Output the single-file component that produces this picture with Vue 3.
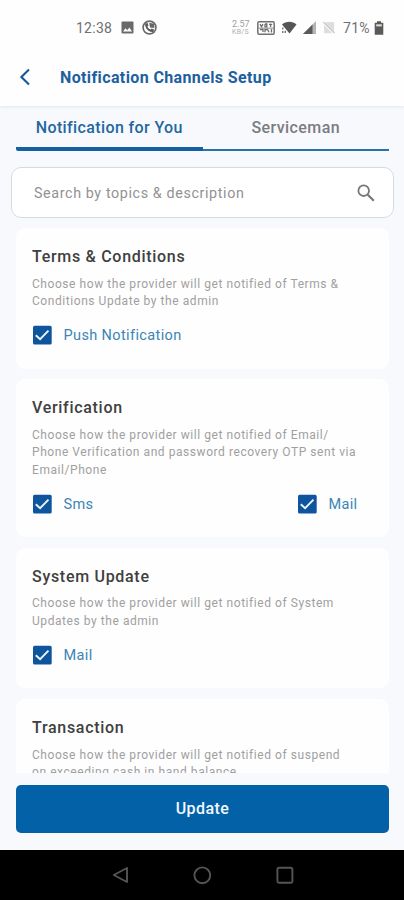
<script setup>
import { ref } from 'vue'

const query = ref('')
const cards = ref([
  {
    title: 'Terms & Conditions',
    lines: ['Choose how the provider will get notified of Terms &', 'Conditions Update by the admin'],
    options: ['Push Notification']
  },
  {
    title: 'Verification',
    lines: ['Choose how the provider will get notified of Email/', 'Phone Verification and password recovery OTP sent via', 'Email/Phone'],
    options: ['Sms', 'Mail']
  },
  {
    title: 'System Update',
    lines: ['Choose how the provider will get notified of System', 'Updates by the admin'],
    options: ['Mail']
  },
  {
    title: 'Transaction',
    lines: ['Choose how the provider will get notified of suspend', 'on exceeding cash in hand balance'],
    options: []
  }
])
</script>

<template>
  <div class="screen">
    <header class="top">
      <div class="status">
        <div class="status-left">
          <span class="clock">12:38</span>
          <svg class="pic" width="13" height="13" viewBox="0 0 13 13">
            <rect x="0.5" y="0.5" width="12" height="12" rx="1" fill="#6a6a6a" />
            <path d="M2 10.5 4.5 7.3 6.3 9.2 8.4 6.6 11 10.5Z" fill="#fff" />
          </svg>
          <svg class="call" width="15" height="15" viewBox="0 0 15 15">
            <circle cx="7.5" cy="7.5" r="6.4" fill="#fff" stroke="#6a6a6a" stroke-width="1.7" />
            <path d="M3.2 3.5 5.6 3 6.5 5.5 5.4 6.6C6 8 7 9 8.5 9.6L9.7 8.5 12 9.6 11.5 11.8C7 13 2.5 8 3.2 3.5Z" fill="#5a5a5a" />
            <path d="M7.2 2.8 12 3.8 12.3 8 8 7.4Z" fill="#666" />
          </svg>
        </div>
        <div class="status-right">
          <div class="speed"><span class="rate">2.57</span><span class="unit">KB/S</span></div>
          <svg class="volte" width="18" height="14" viewBox="0 0 18 14">
            <rect x="0.8" y="0.8" width="16.4" height="12.4" rx="1.5" fill="#fff" stroke="#707070" stroke-width="1.5" />
            <path d="M3 3.2 4.5 5.7 6 3.2M8 3V5.8H9.8V3H8M12 3.3H15.2M13.6 3.3V6M3 8.5H6V11M8 11.2V8.5H10.5L12 11.2M14.5 8V11.5" fill="none" stroke="#6c6c6c" stroke-width="1.3" />
            <path d="M1 7.1H17" stroke="#8a8a8a" />
          </svg>
          <svg class="wifi" width="16" height="13" viewBox="0 0 16 13">
            <path d="M1 3.5C5 -0.2 11.5 -0.2 15.5 3.5L8.5 12.5Z" fill="#555" />
            <path d="M1.8 6.5V8.5M1.8 10V12M4.3 9.7V12" stroke="#777" stroke-width="1.4" />
          </svg>
          <svg class="signal" width="13" height="13" viewBox="0 0 13 13">
            <path d="M13 0V13H0Z" fill="#b5b5b5" />
            <path d="M9.5 3.5V13H0Z" fill="#5a5a5a" />
          </svg>
          <svg class="nosim" width="12" height="13" viewBox="0 0 12 13">
            <path d="M3.5 1H11V12.2H1V3.5Z" fill="#dedede" />
            <path d="M0.5 1.5 11.5 12.5" stroke="#fff" stroke-width="2.4" />
            <path d="M0.5 1 11.5 12" stroke="#c2c2c2" stroke-width="1.1" />
          </svg>
          <span class="percent">71%</span>
          <svg class="battery" width="10" height="14" viewBox="0 0 10 14">
            <path d="M3 0.3H7V1.8H9.3V13.7H0.7V1.8H3Z" fill="#5a5a5a" />
            <path d="M2.2 3.3H7.8V5.4H2.2Z" fill="#ddd" />
          </svg>
        </div>
      </div>
      <div class="titlebar">
        <svg class="back" width="12" height="18" viewBox="0 0 12 18">
          <path d="M10 1.6 2.4 9 10 16.4" fill="none" stroke="#15569c" stroke-width="2.1" />
        </svg>
        <h1>Notification Channels Setup</h1>
      </div>
    </header>

    <nav class="tabs">
      <button class="tab active">Notification for You</button>
      <button class="tab">Serviceman</button>
    </nav>

    <label class="search">
      <input v-model="query" type="text" placeholder="Search by topics &amp; description" />
      <svg width="18" height="18" viewBox="0 0 18 18">
        <circle cx="6.7" cy="6.7" r="5.3" fill="none" stroke="#777" stroke-width="1.8" />
        <path d="M10.8 10.8 16.8 16.8" stroke="#777" stroke-width="2.2" />
      </svg>
    </label>

    <main class="list">
      <section v-for="card in cards" :key="card.title" class="card">
        <h2>{{ card.title }}</h2>
        <p><span v-for="line in card.lines" :key="line">{{ line }}</span></p>
        <div class="options">
          <div v-for="option in card.options" :key="option" class="option">
            <svg width="20" height="20" viewBox="0 0 20 20">
              <rect x="1" y="0.8" width="18.7" height="18.7" rx="1.6" fill="#0e559d" />
              <path d="M3.8 10.2 8.1 14.2 16.5 5.7" fill="none" stroke="#eef6fb" stroke-width="1.9" />
            </svg>
            <span>{{ option }}</span>
          </div>
        </div>
      </section>
    </main>

    <footer class="action">
      <button class="update">Update</button>
    </footer>

    <div class="navbar">
      <svg width="18" height="20" viewBox="0 0 18 20">
        <path d="M17 3V17L3.8 10Z" fill="none" stroke="#555" stroke-width="1.9" stroke-linejoin="round" />
      </svg>
      <svg width="20" height="20" viewBox="0 0 20 20">
        <circle cx="10.3" cy="10.3" r="7.9" fill="none" stroke="#555" stroke-width="1.9" />
      </svg>
      <svg width="18" height="20" viewBox="0 0 18 20">
        <rect x="1.4" y="2.8" width="15" height="15" rx="1.8" fill="none" stroke="#555" stroke-width="1.9" />
      </svg>
    </div>
  </div>
</template>

<style>
body {
  margin: 0;
  overflow: hidden;
}
</style>

<style scoped>
.screen {
  display: flex;
  flex-direction: column;
  box-sizing: border-box;
  width: 404px;
  height: 900px;
  overflow: hidden;
  background: #f8f9fd;
  font-family: Roboto, "Liberation Sans", sans-serif;
}
button {
  border: 0;
  padding: 0;
  background: none;
  font: inherit;
}
h1, h2, p {
  margin: 0;
  white-space: nowrap;
}
svg {
  display: block;
  flex: none;
}
.top {
  flex: none;
  box-sizing: border-box;
  height: 106px;
  background: #fefefe;
  box-shadow: 0 1px 3px #dfe6ea;
}
.status {
  display: flex;
  justify-content: space-between;
  height: 54px;
  padding: 1px 20px 0 76px;
  box-sizing: border-box;
  color: #707070;
}
.status-left, .status-right {
  display: flex;
  align-items: center;
}
.clock {
  width: 45px;
  font-size: 14px;
  letter-spacing: 0.25px;
}
.call { margin-left: 8px; }
.speed {
  display: flex;
  flex-direction: column;
  width: 25px;
  color: #a0a0a0;
}
.rate {
  font-size: 9px;
  line-height: 9px;
}
.unit {
  color: #b0b0b0;
  font-size: 7px;
  line-height: 7px;
  letter-spacing: 0.3px;
}
.wifi { margin-left: 6px; }
.signal { margin-left: 6px; }
.nosim { margin-left: 7px; }
.percent {
  width: 31px;
  margin-left: 8px;
  font-size: 14px;
  letter-spacing: 0.3px;
}
.titlebar {
  display: flex;
  align-items: center;
  height: 46px;
  padding-left: 19px;
}
h1 {
  margin-left: 29px;
  padding-top: 1px;
  color: #1d609f;
  font-size: 16px;
  font-weight: 700;
  letter-spacing: 0.38px;
}
.tabs {
  display: grid;
  flex: none;
  grid-template-columns: 1fr 1fr;
  height: 45px;
  padding: 0 15px 0 16px;
}
.tab {
  height: 45px;
  padding-bottom: 1px;
  border-bottom: 2px solid #2c72a8;
  color: #7b7c80;
  font-size: 16px;
  font-weight: 500;
  letter-spacing: 0.42px;
}
.tab.active {
  border-bottom: 4px solid #1460a3;
  padding-top: 1px;
  padding-bottom: 0;
  border-radius: 2px 0 0 2px;
  color: #22689f;
  letter-spacing: 0.38px;
}
.search {
  display: flex;
  flex: none;
  align-items: center;
  box-sizing: border-box;
  height: 51px;
  margin: 16px 10px 0 11px;
  padding: 0 18px 0 22px;
  border: 1px solid #d3dde0;
  border-radius: 10px;
  background: #fff;
}
input {
  flex: 1;
  min-width: 0;
  padding: 0;
  border: 0;
  outline: 0;
  background: none;
  font: 14.3px Roboto, "Liberation Sans", sans-serif;
  letter-spacing: 0.62px;
}
input::placeholder {
  color: #929292;
  opacity: 1;
}
.list {
  display: flex;
  flex: none;
  flex-direction: column;
  gap: 10.5px;
  height: 545px;
  margin: 10px 15px 0 16px;
  overflow: hidden;
}
.card {
  flex: none;
  box-sizing: border-box;
  padding: 18px 16px 23.6px;
  border-radius: 9px;
  background: #fefefe;
}
h2 {
  height: 22px;
  color: #404040;
  font-size: 16px;
  font-weight: 500;
  line-height: 22px;
  letter-spacing: 0.7px;
}
.card p {
  margin-top: 7.6px;
  color: #a0a0a0;
  font-size: 12px;
  line-height: 17.7px;
  letter-spacing: 0.56px;
}
.card p span { display: block; }
.options {
  display: flex;
  justify-content: space-between;
  min-height: 20px;
  margin-top: 14px;
  padding-right: 15.5px;
}
.option {
  display: flex;
  align-items: center;
  gap: 11.5px;
  height: 20px;
  color: #3a85b5;
  font-size: 14.5px;
  letter-spacing: 0.38px;
}
.option span { padding-top: 1px; }
.action {
  flex: none;
  box-sizing: border-box;
  height: 77px;
  padding: 12px 15px 0 16px;
}
.update {
  display: block;
  width: 100%;
  height: 47.5px;
  border-radius: 5px;
  background: #0361a8;
  color: #f3f8fc;
  font-size: 16px;
  font-weight: 500;
  letter-spacing: 0.45px;
}
.navbar {
  display: flex;
  flex: none;
  align-items: center;
  justify-content: center;
  gap: 64px;
  height: 50px;
  background: #000;
}
</style>
